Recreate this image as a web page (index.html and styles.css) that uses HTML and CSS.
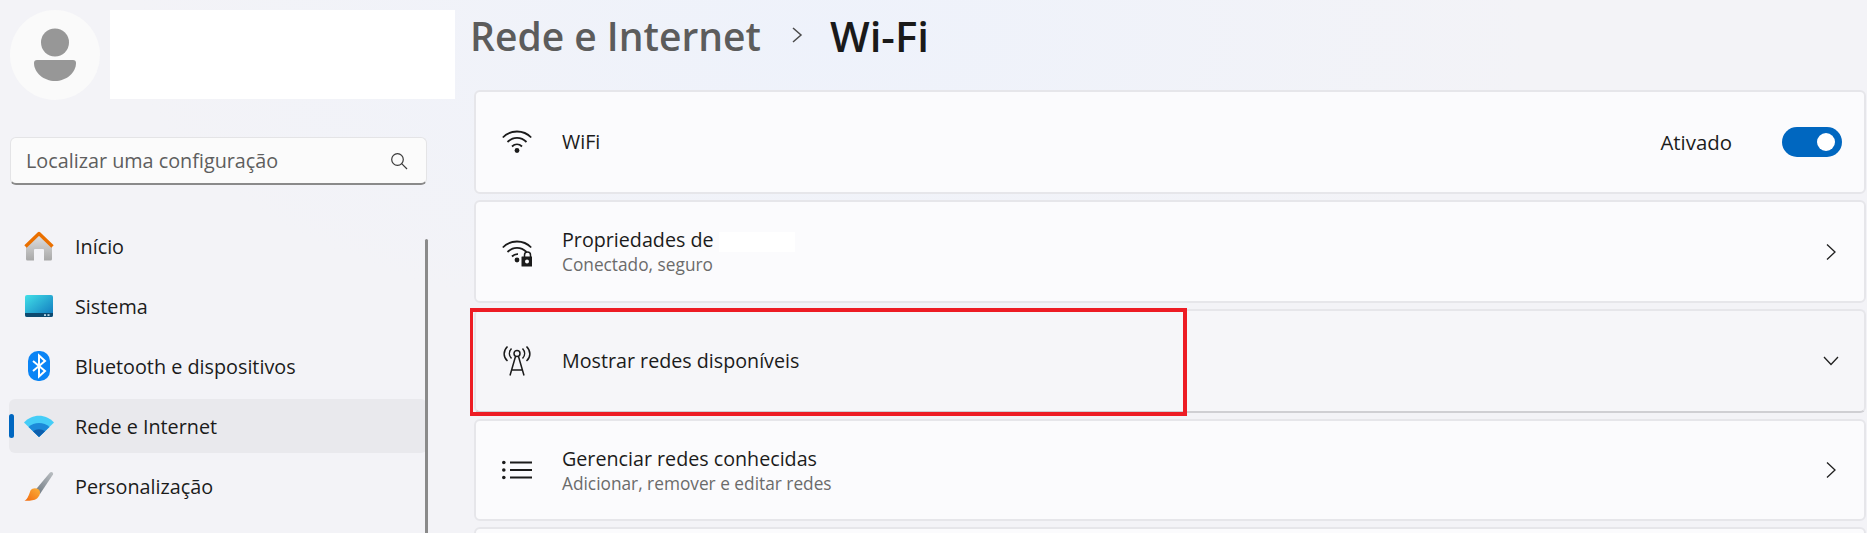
FILE: index.html
```html
<!DOCTYPE html>
<html>
<head>
    <meta charset="utf-8">
    <link rel="stylesheet" href="styles.css">
</head>
<body>
    <!-- Sidebar -->
    <div class="sidebar">
        <div class="profile">
            <div class="avatar">
                <svg width="90" height="90" viewBox="0 0 90 90" fill="#979797">
                    <circle cx="45" cy="32.500" r="14"/>
                    <path d="M24 53a3 3 0 0 1 3-3h36a3 3 0 0 1 3 3c0 10-10 18-21 18s-21-8-21-18z"/>
                </svg>
            </div>
            <div class="profile-name"></div>
        </div>

        <div class="search">
            <span>Localizar uma configuração</span>
            <svg width="18" height="18" viewBox="0 0 18 18" fill="none" stroke="#3a3a3a" stroke-width="1.200">
                <circle cx="7.500" cy="7.500" r="5.800"/>
                <path d="M11.700 11.700l5.300 5.300"/>
            </svg>
        </div>

        <div class="nav">
            <div class="nav-item">
                <svg class="nav-icon" viewBox="0 0 30 30">
                    <defs>
                        <linearGradient id="wall" x1="0" y1="0" x2="0" y2="1"><stop offset="0" stop-color="#e2e2e2"/><stop offset="1" stop-color="#a8a8a8"/></linearGradient>
                    </defs>
                    <path d="M15 3L2 15v13a1.500 1.500 0 0 0 1.500 1.500H10V19a1 1 0 0 1 1-1h8a1 1 0 0 1 1 1v10.500h6.500A1.500 1.500 0 0 0 28 28V15z" fill="url(#wall)"/>
                    <path d="M1.500 15.500L15 2.500l13.500 13" fill="none" stroke="#ea7000" stroke-width="3.400" stroke-linejoin="round"/>
                </svg>
                Início
            </div>
            <div class="nav-item">
                <svg class="nav-icon" viewBox="0 0 30 30">
                    <defs>
                        <linearGradient id="screen" x1="0" y1="0" x2="1" y2="1"><stop offset="0" stop-color="#42e0e8"/><stop offset="1" stop-color="#0f75bd"/></linearGradient>
                    </defs>
                    <rect x="1" y="4" width="28" height="22" rx="2" fill="url(#screen)"/>
                    <path d="M1 22h28v2a2 2 0 0 1-2 2H3a2 2 0 0 1-2-2z" fill="#0d4a70"/>
                    <rect x="20" y="23.200" width="2" height="1.800" fill="#b9d6e4"/>
                    <rect x="23.500" y="23.200" width="2" height="1.800" fill="#b9d6e4"/>
                </svg>
                Sistema
            </div>
            <div class="nav-item">
                <svg class="nav-icon" viewBox="0 0 30 30">
                    <rect x="4" y="0" width="22" height="30" rx="10" fill="#0a84f5"/>
                    <path d="M9 10l12 10-6 5.500V4.500l6 5.500-12 10" fill="none" stroke="#fff" stroke-width="2"/>
                </svg>
                Bluetooth e dispositivos
            </div>
            <div class="nav-item nav-active">
                <div class="nav-pill"></div>
                <svg class="nav-icon" viewBox="0 0 30 30">
                    <path d="M0 11.500C8 2.500 22 2.500 30 11.500L15 26z" fill="#45cdf7"/>
                    <path d="M4.500 16C10 10.500 20 10.500 25.500 16L15 26z" fill="#1c8ad9"/>
                    <path d="M9 20.300c3.500-2.800 8.500-2.800 12 0L15 26z" fill="#0d5fae"/>
                </svg>
                Rede e Internet
            </div>
            <div class="nav-item">
                <svg class="nav-icon" viewBox="0 0 30 30">
                    <defs>
                        <linearGradient id="handle" x1="0" y1="1" x2="1" y2="0"><stop offset="0" stop-color="#6d7780"/><stop offset="1" stop-color="#bcc0c4"/></linearGradient>
                        <linearGradient id="bristle" x1="0" y1="1" x2="1" y2="0"><stop offset="0" stop-color="#f26a10"/><stop offset="1" stop-color="#fbb03a"/></linearGradient>
                    </defs>
                    <path d="M11 19.500L26 1.500c1.500-1.500 3.800 0 3 2L16 23z" fill="url(#handle)"/>
                    <path d="M6.500 19.500c2-3 7-3 9 0 1.500 3-.5 6-2.500 8-3 2.200-8 2.500-12.500 2.300 3.500-2 4.500-6.500 6-10.300z" fill="url(#bristle)"/>
                </svg>
                Personalização
            </div>
            <div class="nav-item">
                <svg class="nav-icon" viewBox="0 0 30 30">
                    <circle cx="15" cy="10" r="7" fill="#1fb6f0"/>
                </svg>
            </div>
        </div>
        <div class="scrollbar"></div>
    </div>

    <!-- Main content -->
    <div class="main">
        <div class="title">
            <span class="title-parent">Rede e Internet</span>
            <svg width="12" height="18" viewBox="0 0 12 18" fill="none" stroke="#4a4a4a" stroke-width="1.500"><path d="M2 2l8 7-8 7"/></svg>
            <span class="title-page">Wi-Fi</span>
        </div>

        <div class="cards">
            <div class="card">
                <svg class="card-icon" viewBox="0 0 30 30" fill="none" stroke="#1b1b1b" stroke-width="1.800">
                    <path d="M.8 10.500C8.500 2.500 21.500 2.500 29.200 10.500"/>
                    <path d="M5.500 15C11 9.500 19 9.500 24.500 15"/>
                    <path d="M10 19.500c3-2.800 7-2.800 10 0"/>
                    <circle cx="15" cy="23.500" r="2.400" fill="#1b1b1b" stroke="none"/>
                </svg>
                <div class="card-text"><div class="card-title">WiFi</div></div>
                <span class="state">Ativado</span>
                <div class="toggle"><div class="knob"></div></div>
            </div>

            <div class="card">
                <svg class="card-icon" viewBox="0 0 30 30" fill="none" stroke="#1b1b1b" stroke-width="1.800">
                    <path d="M.8 10.500C8.500 2.500 21.500 2.500 29.200 10.500"/>
                    <path d="M5.500 15C11 9.500 19 9.500 24.500 15"/>
                    <path d="M10 19.500c2-2 4-2.500 6-2.300"/>
                    <circle cx="15" cy="23" r="2.400" fill="#1b1b1b" stroke="none"/>
                    <path d="M22.500 20v-2a3 3 0 0 1 6 0v2" stroke-width="1.500"/>
                    <path fill-rule="evenodd" d="M20 19.500h10a.5.5 0 0 1 .5.5v9a.5.5 0 0 1-.5.5H20a.5.5 0 0 1-.5-.5v-9a.5.5 0 0 1 .5-.5zm5 3a2 2 0 1 0 0 4 2 2 0 0 0 0-4z" fill="#1b1b1b" stroke="none"/>
                </svg>
                <div class="card-text">
                    <div class="card-title">Propriedades de <span class="redacted"></span></div>
                    <div class="card-sub">Conectado, seguro</div>
                </div>
                <svg class="chevron" width="10" height="18" viewBox="0 0 10 18" fill="none" stroke="#1f1f1f" stroke-width="1.300"><path d="M1 1.500l8 7.500-8 7.500"/></svg>
            </div>

            <div class="card card-hover">
                <svg class="card-icon" viewBox="0 0 30 30" fill="none" stroke="#1b1b1b" stroke-width="1.500">
                    <circle cx="15" cy="7.500" r="3"/>
                    <path d="M9.500 2.500c-2.800 3-2.800 7 0 10M20.500 2.500c2.800 3 2.800 7 0 10"/>
                    <path d="M5.500.5c-4.500 4.500-4.500 10.500 0 14.500M24.500.5c4.500 4.500 4.500 10.500 0 14.500"/>
                    <path d="M13.500 10.500L8 29.500M16.500 10.500L22 29.500M9.500 24h11"/>
                </svg>
                <div class="card-text"><div class="card-title">Mostrar redes disponíveis</div></div>
                <svg class="chevron-down" width="16" height="10" viewBox="0 0 16 10" fill="none" stroke="#1f1f1f" stroke-width="1.300"><path d="M1 1l7 7.500L15 1"/></svg>
            </div>

            <div class="card">
                <svg class="card-icon" viewBox="0 0 30 30" fill="none" stroke="#1b1b1b" stroke-width="1.800">
                    <path d="M8 7.500h22M8 15h22M8 22.500h22"/>
                    <g fill="#1b1b1b" stroke="none">
                        <circle cx="1.800" cy="7.500" r="1.800"/>
                        <circle cx="1.800" cy="15" r="1.800"/>
                        <circle cx="1.800" cy="22.500" r="1.800"/>
                    </g>
                </svg>
                <div class="card-text">
                    <div class="card-title">Gerenciar redes conhecidas</div>
                    <div class="card-sub">Adicionar, remover e editar redes</div>
                </div>
                <svg class="chevron" width="10" height="18" viewBox="0 0 10 18" fill="none" stroke="#1f1f1f" stroke-width="1.300"><path d="M1 1.500l8 7.500-8 7.500"/></svg>
            </div>

            <div class="card"></div>
        </div>

        <!-- Annotation drawn over the page -->
        <div class="highlight"></div>
    </div>
</body>
</html>
```

FILE: styles.css
```css
html, body {
    height: 533px;
    overflow: hidden;
}
body {
    margin: 0;
    display: flex;
    font-family: "Open Sans", sans-serif;
    color: #1b1b1b;
    background: radial-gradient(ellipse 700px 300px at 830px 40px, #eef2fb 0%, #f3f3f7 100%);
}
.sidebar {
    position: relative;
    width: 470px;
    height: 533px;
    overflow: hidden;
    flex-shrink: 0;
    padding: 10px 0 0 9px;
    box-sizing: border-box;
}
.profile {
    display: flex;
    gap: 10px;
    padding-left: 1px;
}
.avatar {
    width: 90px;
    height: 90px;
    border-radius: 50%;
    background: #fafafa;
}
.profile-name {
    width: 345px;
    height: 89px;
    background: white;
}
.search {
    width: 417px;
    height: 48px;
    margin: 37px 0 0 1px;
    padding: 0 18px 0 15px;
    box-sizing: border-box;
    display: flex;
    align-items: center;
    justify-content: space-between;
    background: #fbfbfb;
    border: 1px solid #e4e4e6;
    border-bottom: 2px solid #8a8a8a;
    border-radius: 6px;
    font-size: 19.800px;
    color: #5e5e5e;
}
.nav {
    margin-top: 34px;
}
.nav-item {
    position: relative;
    width: 418px;
    height: 54px;
    margin-bottom: 6px;
    padding-left: 15px;
    box-sizing: border-box;
    display: flex;
    align-items: center;
    gap: 21px;
    font-size: 19.800px;
    border-radius: 6px;
}
.nav-active {
    background: #e9e9ed;
}
.nav-pill {
    position: absolute;
    left: 0;
    top: 15px;
    width: 5px;
    height: 24px;
    border-radius: 3px;
    background: #0067c0;
}
.nav-icon {
    width: 30px;
    height: 30px;
    flex-shrink: 0;
}
.scrollbar {
    position: absolute;
    left: 425px;
    top: 239px;
    width: 3px;
    height: 294px;
    border-radius: 2px 2px 0 0;
    background: #8a8a8a;
}

.main {
    position: relative;
    flex: 1;
    min-width: 0;
    height: 533px;
    overflow: hidden;
}
.title {
    height: 90px;
    padding-bottom: 20px;
    box-sizing: border-box;
    display: flex;
    align-items: center;
    font-size: 39px;
    font-weight: 600;
}
.title-parent {
    color: #5c5c5c;
}
.title svg {
    margin: 0 27px 0 30px;
}
.title-page {
    font-size: 42px;
    color: #1a1a1a;
}
.cards {
    padding: 0 1px 0 4px;
    display: grid;
    grid-template-rows: 110px 109px 110px 108px 100px;
}
.card {
    height: calc(100% - 6px);
    box-sizing: border-box;
    padding: 0 22px 0 26px;
    display: flex;
    align-items: center;
    background: #fbfbfd;
    border: 2px solid #e6e6ea;
    border-radius: 6px;
}
.card-hover {
    background: #f6f6f9;
    border-bottom-color: #cfcfd3;
}
.card-icon {
    width: 30px;
    height: 30px;
    flex-shrink: 0;
    margin-right: 30px;
}
.card-text {
    flex: 1;
}
.card-title {
    font-size: 19.700px;
    line-height: 26px;
}
.card-sub {
    font-size: 17.300px;
    line-height: 23px;
    color: #6b6b6b;
}
.redacted {
    display: inline-block;
    width: 76px;
    height: 20px;
    vertical-align: middle;
    background: white;
}
.state {
    font-size: 20.400px;
    margin-right: 50px;
}
.toggle {
    width: 60px;
    height: 30px;
    border-radius: 15px;
    background: #0067c0;
    display: flex;
    align-items: center;
    justify-content: flex-end;
    padding-right: 7px;
    box-sizing: border-box;
}
.knob {
    width: 18px;
    height: 18px;
    border-radius: 50%;
    background: white;
}
.chevron {
    margin-right: 6px;
}
.chevron-down {
    margin-right: 3px;
}
.highlight {
    position: absolute;
    left: -1px;
    top: 308px;
    width: 718px;
    height: 108px;
    box-sizing: border-box;
    border: 4px solid #ed1c24;
}
```
